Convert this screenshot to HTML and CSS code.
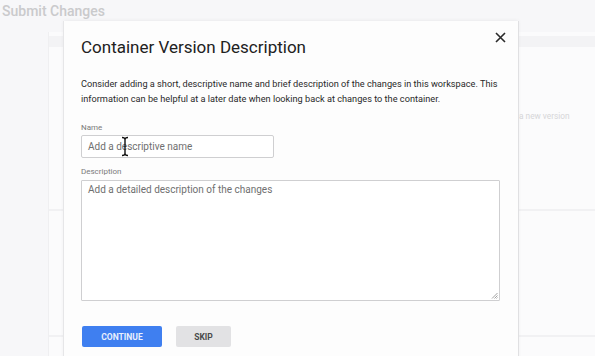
FILE: index.html
```html
<!DOCTYPE html>
<html>
<head>
<meta charset="utf-8">
<link rel="stylesheet" href="styles.css">
</head>
<body>
<div class="page">
  <h1 class="page-title">Submit Changes</h1>
  <div class="bg-card">
    <div class="bg-band"></div>
    <div class="bg-text">a new version</div>
    <div class="bg-row row-a"></div>
    <div class="bg-row row-b"></div>
  </div>
</div>

<div class="dialog">
  <h2 class="dialog-title">Container Version Description</h2>
  <svg class="close" width="11" height="11" viewBox="0 0 11 11"><path d="M1 1L10 10M10 1L1 10" stroke="#2a2a2a" stroke-width="1.6" fill="none"/></svg>
  <p class="intro">Consider adding a short, descriptive name and brief description of the changes in this workspace. This information can be helpful at a later date when looking back at changes to the container.</p>
  <label class="field-label">Name</label>
  <div class="input-wrap">
    <div class="input">Add a descriptive name</div>
    <svg class="ibeam" width="8" height="21" viewBox="0 0 8 21"><path d="M1 1.5C3 1.5 4 2 4 3.5V17.5C4 19 3 19.5 1 19.5M7 1.5C5 1.5 4 2 4 3.5M4 17.5C4 19 5 19.5 7 19.5" stroke="#111" stroke-width="1.4" fill="none"/></svg>
  </div>
  <label class="field-label">Description</label>
  <div class="textarea">Add a detailed description of the changes
    <svg class="grip" width="7" height="7" viewBox="0 0 7 7"><path d="M6.5 1L1 6.5M6.5 3.5L3.5 6.5M6.5 5.5L5.5 6.5" stroke="#888" stroke-width="0.8"/></svg>
  </div>
  <div class="actions">
    <button class="btn primary">CONTINUE</button>
    <button class="btn secondary">SKIP</button>
  </div>
</div>
</body>
</html>
```

FILE: styles.css
```css
* { box-sizing: border-box; }
html, body { margin: 0; padding: 0; }
body {
  width: 595px;
  height: 356px;
  overflow: hidden;
  background: #f7f7f9;
  font-family: Roboto, "Liberation Sans", sans-serif;
  position: relative;
}
.page { padding: 0 0 0 2px; }
.page-title {
  margin: 0;
  padding-top: 2px;
  font-size: 14px;
  font-weight: 500;
  color: #cacacc;
  line-height: 18px;
}
.bg-card {
  margin: 12px 0 0 46px;
  height: 340px;
  background: #fbfbfc;
  border-left: 1px solid #efeff1;
  padding-top: 4px;
}
.bg-band {
  height: 11px;
  background: #f3f3f5;
}
.bg-text {
  margin-top: 64px;
  padding-left: 470px;
  font-size: 8.3px;
  line-height: 11px;
  color: #d6d6d8;
  white-space: nowrap;
}
.bg-row { border-bottom: 2px solid #f1f1f3; }
.row-a { height: 89px; }
.row-b { height: 126px; }

.dialog {
  position: absolute;
  left: 64px;
  top: 21px;
  width: 454px;
  height: 345px;
  background: #fdfdfd;
  box-shadow: -1px 0 0 #e6e6e8, 1px 0 0 #e0e0e2, 0 0 4px rgba(0,0,0,0.08);
  padding: 15px 17px 0;
}
.dialog-title {
  margin: 0;
  font-size: 17px;
  font-weight: 400;
  color: #212121;
  line-height: 22px;
}
.close { position: absolute; top: 11px; right: 12px; }
.intro {
  margin: 18px 0 0;
  font-size: 9.2px;
  line-height: 15px;
  color: #2a2a2a;
}
.field-label {
  display: block;
  font-size: 8px;
  color: #7a7a7a;
  margin-top: 16px;
  line-height: 12px;
}
.input-wrap { position: relative; width: 193px; margin-top: 1px; }
.input {
  height: 23px;
  border: 1px solid #cfcfd1;
  border-radius: 2px;
  background: #fff;
  font-size: 10px;
  color: #6f6f6f;
  padding: 0 6px;
  line-height: 21px;
}
.ibeam { position: absolute; left: 40px; top: 1px; }
.input-wrap + .field-label { margin-top: 8px; }
.textarea {
  position: relative;
  margin-top: 2px;
  width: 419px;
  height: 121px;
  border: 1px solid #cfcfd1;
  border-radius: 1px;
  background: #fff;
  font-size: 10px;
  color: #6f6f6f;
  padding: 2px 6px;
  line-height: 14px;
}
.grip { position: absolute; right: 1px; bottom: 1px; }
.actions {
  display: flex;
  gap: 14px;
  margin-top: 25px;
  padding-left: 1px;
}
.btn {
  height: 21px;
  border: none;
  border-radius: 2px;
  font-family: Roboto, "Liberation Sans", sans-serif;
  font-size: 8.5px;
  font-weight: 700;
  padding: 0;
}
.primary { width: 80px; background: #3f7ff0; color: #e9f0fd; }
.secondary { width: 55px; background: #e2e2e4; color: #4a4a4a; }
```
